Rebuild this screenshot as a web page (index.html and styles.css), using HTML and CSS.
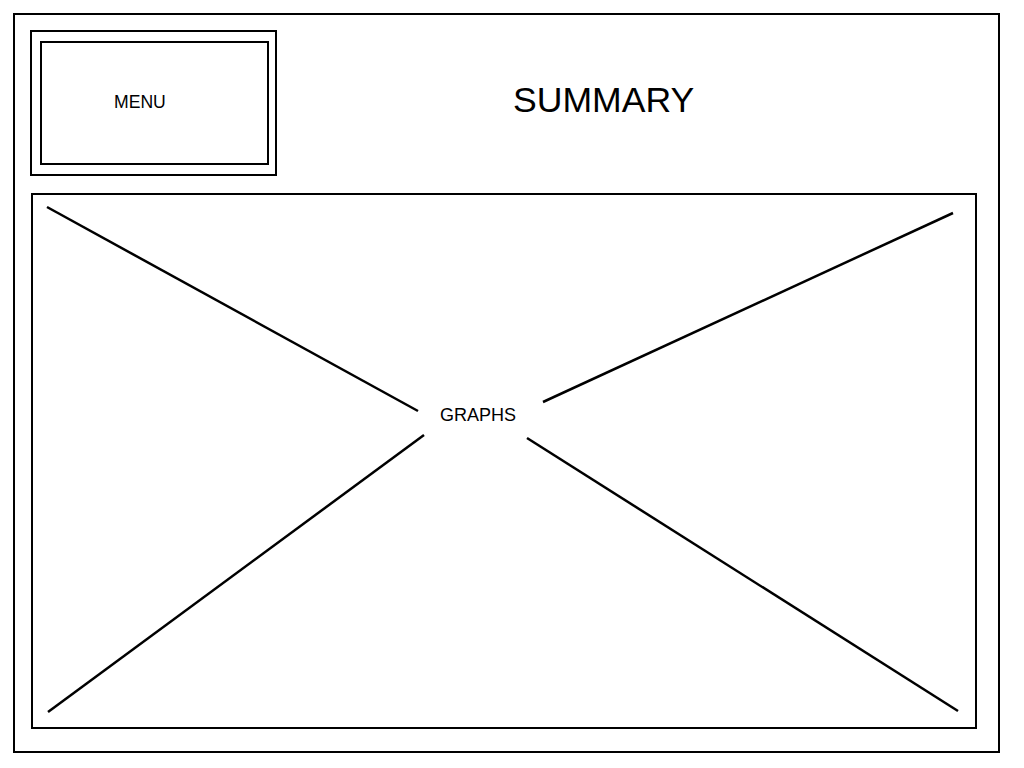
FILE: index.html
```html
<!DOCTYPE html>
<html>
<head>
    <title>Summary</title>
    <link rel="stylesheet" href="styles.css">
</head>
<body>
    <div class="frame">
        <div class="top-row">
            <div class="menu-box">
                <div class="menu-inner">MENU</div>
            </div>
            <h1 class="title">SUMMARY</h1>
        </div>
        <div class="graphs">
            <!-- placeholder cross -->
            <svg class="cross" width="942" height="532" viewBox="0 0 942 532">
                <line x1="14" y1="12" x2="385" y2="216" />
                <line x1="920" y1="18" x2="510" y2="207" />
                <line x1="15" y1="517" x2="391" y2="240" />
                <line x1="925" y1="516" x2="494" y2="243" />
            </svg>
            <span class="graphs-label">GRAPHS</span>
        </div>
    </div>
</body>
</html>
```

FILE: styles.css
```css
body {
    font-family: "Liberation Sans", Arial, sans-serif;
    margin: 0;
    padding: 13px;
    background: #fff;
    color: #000;
}
.frame {
    box-sizing: border-box;
    width: 987px;
    height: 740px;
    border: 2px solid #000;
    padding: 15px 0 0 15px;
}
.top-row {
    display: flex;
    align-items: center;
    height: 146px;
}
.menu-box {
    box-sizing: border-box;
    width: 247px;
    height: 146px;
    border: 2px solid #000;
    padding: 9px 6px 9px 8px;
}
.menu-inner {
    box-sizing: border-box;
    height: 124px;
    border: 2px solid #000;
    display: flex;
    align-items: center;
    padding: 0 0 2px 72px;
    font-size: 17.6px;
}
.title {
    margin: 0 0 6px 236px;
    font-size: 35.6px;
    font-weight: normal;
}
.graphs {
    position: relative;
    box-sizing: border-box;
    width: 946px;
    height: 536px;
    margin: 17px 0 0 1px;
    border: 2px solid #000;
}
.cross {
    display: block;
}
.cross line {
    stroke: #000;
    stroke-width: 2.5;
}
.graphs-label {
    position: absolute;
    left: 407px;
    top: 211px;
    font-size: 18px;
    line-height: 1;
    background: #fff;
}
```
